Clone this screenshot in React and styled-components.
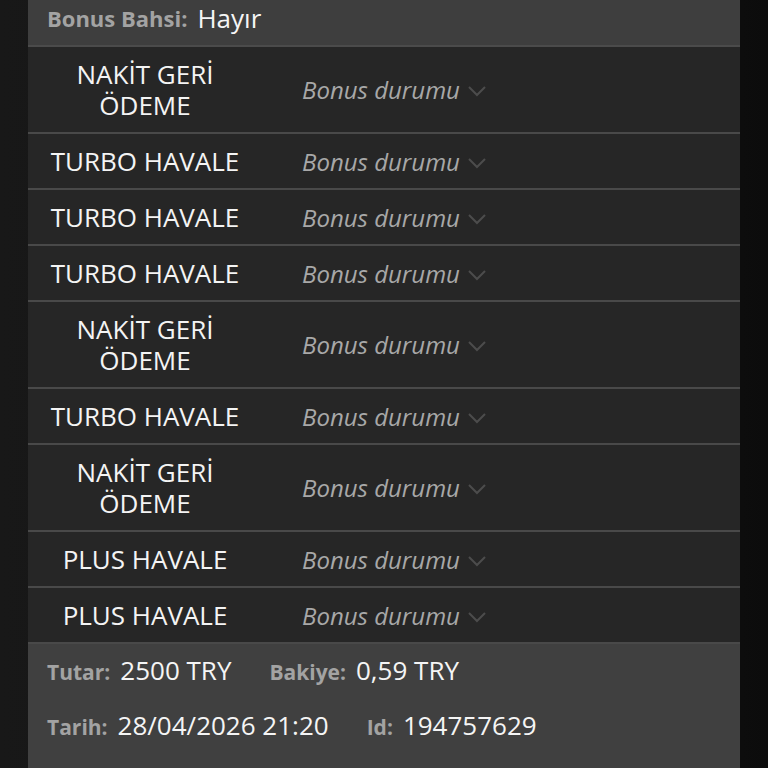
import React from 'react';
import styled, { createGlobalStyle } from 'styled-components';

const GlobalStyle = createGlobalStyle`
  html, body {
    margin: 0;
    padding: 0;
    background: #131313;
    font-family: "Open Sans", "Noto Sans", sans-serif;
  }
`;

const Page = styled.div`
  height: 768px;
  background: linear-gradient(90deg, #181818 0%, #141414 40%, #121212 80%, #0c0c0c 100%);
  padding: 0 28px;
  overflow: hidden;
`;

const Panel = styled.div`
  width: 712px;
  background: #262626;
`;

const HeaderBar = styled.div`
  display: flex;
  align-items: center;
  gap: 10px;
  height: 35px;
  padding: 0 19px 10px;
  background: #3e3e3e;
  border-bottom: 2px solid #4b4b4b;
`;

const Label = styled.span`
  font-size: ${p => (p.$small ? '21px' : '22px')};
  font-weight: 700;
  color: #a3a3a3;
`;

const Value = styled.span`
  font-size: 26px;
  color: #f5f5f5;
`;

const Row = styled.div`
  display: flex;
  align-items: center;
  padding: 11.5px 0;
  border-bottom: 2px solid #494949;
  &:last-child {
    border-bottom: none;
  }
`;

const Method = styled.div`
  width: 234px;
  text-align: center;
  font-size: 26px;
  line-height: 31px;
  color: #f4f4f4;
`;

const StatusSelect = styled.div`
  display: flex;
  align-items: center;
  gap: 7px;
  margin-left: 40px;
  font-size: 24px;
  font-style: italic;
  line-height: 31px;
  color: #a8a8a8;
`;

const Chevron = () => (
  <svg width="20" height="12" viewBox="0 0 20 12" style={{ marginTop: 3 }}>
    <path d="M2 2 L10 10 L18 2" fill="none" stroke="#4c4c4c" strokeWidth="2" />
  </svg>
);

const Footer = styled.div`
  background: #404040;
  padding: 0 19px;
`;

const InfoLine = styled.div`
  display: flex;
  align-items: center;
  height: 51px;
  padding-bottom: 4px;
  gap: 38px;
`;

const InfoItem = styled.div`
  display: flex;
  align-items: baseline;
  gap: 10px;
`;

const rows = [
  'NAKİT GERİ ÖDEME',
  'TURBO HAVALE',
  'TURBO HAVALE',
  'TURBO HAVALE',
  'NAKİT GERİ ÖDEME',
  'TURBO HAVALE',
  'NAKİT GERİ ÖDEME',
  'PLUS HAVALE',
  'PLUS HAVALE',
];

export default function App() {
  return (
    <>
      <GlobalStyle />
      <Page>
        <Panel>
          <HeaderBar>
            <Label>Bonus Bahsi:</Label>
            <Value>Hayır</Value>
          </HeaderBar>
          {rows.map((name, i) => (
            <Row key={i}>
              <Method>
                {name === 'NAKİT GERİ ÖDEME' ? (
                  <>
                    NAKİT GERİ
                    <br />
                    ÖDEME
                  </>
                ) : (
                  name
                )}
              </Method>
              <StatusSelect>
                Bonus durumu
                <Chevron />
              </StatusSelect>
            </Row>
          ))}
          <Footer>
            <InfoLine>
              <InfoItem>
                <Label $small>Tutar:</Label>
                <Value>2500 TRY</Value>
              </InfoItem>
              <InfoItem>
                <Label $small>Bakiye:</Label>
                <Value>0,59 TRY</Value>
              </InfoItem>
            </InfoLine>
            <InfoLine>
              <InfoItem>
                <Label $small>Tarih:</Label>
                <Value>28/04/2026 21:20</Value>
              </InfoItem>
              <InfoItem>
                <Label $small>Id:</Label>
                <Value>194757629</Value>
              </InfoItem>
            </InfoLine>
            <InfoLine>
              <InfoItem>
                <Label $small>İşlem:</Label>
                <Value>Onaylandı</Value>
              </InfoItem>
            </InfoLine>
          </Footer>
        </Panel>
      </Page>
    </>
  );
}
